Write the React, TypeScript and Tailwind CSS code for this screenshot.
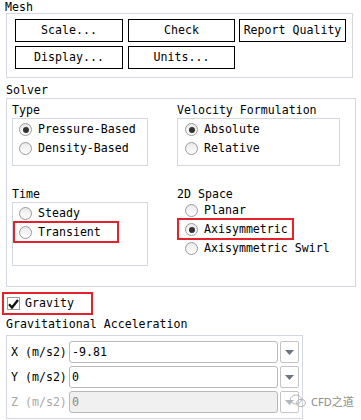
import React from 'react';

const FONT = "font-['DejaVu_Sans_Mono','Liberation_Mono',monospace]";

const Radio: React.FC<{ checked?: boolean }> = ({ checked }) => (
  <span className="flex items-center justify-center w-[13px] h-[13px] rounded-full border border-[#9a9a9a] bg-[linear-gradient(#e9e9e9,#ffffff)] shrink-0">
    {checked && <span className="w-[6px] h-[6px] rounded-full bg-[#333]" />}
  </span>
);

const RadioRow: React.FC<{ label: string; checked?: boolean }> = ({ label, checked }) => (
  <div className="flex items-center h-[19px] gap-[6px] whitespace-nowrap">
    <Radio checked={checked} />
    <span>{label}</span>
  </div>
);

const MeshButton: React.FC<{ label: string; w: string }> = ({ label, w }) => (
  <button className={`${w} h-[23px] border border-black bg-white flex items-center justify-center`}>{label}</button>
);

const VectorRow: React.FC<{ axis: string; value: string; disabled?: boolean }> = ({ axis, value, disabled }) => (
  <div className="flex items-center h-[22px]">
    <span className={`w-[58px] whitespace-nowrap ${disabled ? 'text-[#a8a8a8]' : ''}`}>{axis} (m/s2)</span>
    <div
      className={`w-[209px] h-[22px] border border-[#b9b9b9] rounded-[3px] flex items-center pl-[2px] ${
        disabled ? 'bg-[#f0f0f0] text-[#888]' : 'bg-white'
      }`}
    >
      {value}
    </div>
    <div className="ml-[2px] w-[19px] h-[22px] border border-[#c4c4c4] rounded-[2px] flex items-center justify-center">
      <svg width="9" height="5" viewBox="0 0 9 5">
        <path d="M0 0 H9 L4.5 5 Z" fill={disabled ? '#b0b6bd' : '#6b7480'} />
      </svg>
    </div>
  </div>
);

export default function App() {
  return (
    <div className={`relative w-[361px] h-[420px] bg-white text-black text-[11.6px] leading-[13px] overflow-hidden ${FONT}`}>
      <div className="pl-[5px] pt-[1px] h-[13px]">Mesh</div>
      <div className="ml-[6px] w-[347px] h-[65px] border border-[#d3d8e0] pt-[5px] pl-[8px]">
        <div className="flex">
          <MeshButton label="Scale..." w="w-[108px]" />
          <div className="w-[5px]" />
          <MeshButton label="Check" w="w-[107px]" />
          <div className="w-[4px]" />
          <MeshButton label="Report Quality" w="w-[107px]" />
        </div>
        <div className="flex mt-[4px]">
          <MeshButton label="Display..." w="w-[108px]" />
          <div className="w-[5px]" />
          <MeshButton label="Units..." w="w-[107px]" />
        </div>
      </div>

      <div className="pl-[6px] mt-[6px] h-[13px]">Solver</div>
      <div className="ml-[6px] mt-[1px] w-[350px] h-[189px] border border-[#d3d8e0] flex">
        <div className="w-[142px] pl-[5px] pt-[5px]">
          <div className="h-[13px]">Type</div>
          <div className="mt-[1px] w-[136px] h-[48px] border border-[#d3d8e0] pt-[1px] pl-[6px]">
            <RadioRow label="Pressure-Based" checked />
            <RadioRow label="Density-Based" />
          </div>
          <div className="h-[13px] mt-[22px]">Time</div>
          <div className="mt-[1px] w-[136px] h-[64px] border border-[#d3d8e0] pt-[1px] pl-[6px]">
            <RadioRow label="Steady" />
            <div className="relative">
              <RadioRow label="Transient" />
              <span className="absolute -left-[6px] -top-[2px] w-[106px] h-[22px] border-2 border-[#e5212a]" />
            </div>
          </div>
        </div>
        <div className="pl-[28px] pt-[5px]">
          <div className="h-[13px]">Velocity Formulation</div>
          <div className="mt-[1px] w-[163px] h-[48px] border border-[#d3d8e0] pt-[1px] pl-[7px]">
            <RadioRow label="Absolute" checked />
            <RadioRow label="Relative" />
          </div>
          <div className="h-[13px] mt-[22px]">2D Space</div>
          <div className="pl-[8px]">
            <RadioRow label="Planar" />
            <div className="relative">
              <RadioRow label="Axisymmetric" checked />
              <span className="absolute -left-[8px] -top-[2px] w-[117px] h-[22px] border-2 border-[#e5212a]" />
            </div>
            <RadioRow label="Axisymmetric Swirl" />
          </div>
        </div>
      </div>

      <div className="relative mt-[5px] ml-[7px] h-[23px] flex items-center gap-[5px]">
        <span className="w-[13px] h-[13px] border border-[#9a9a9a] bg-white flex items-center justify-center">
          <svg width="11" height="10" viewBox="0 0 11 10">
            <path d="M1 5.2 L4 8.5 L10 1" stroke="#111" strokeWidth="2.4" fill="none" />
          </svg>
        </span>
        <span>Gravity</span>
        <span className="absolute -left-[5px] top-0 w-[91px] h-[23px] border-2 border-[#e5212a]" />
      </div>

      <div className="pl-[6px] mt-[3px] h-[13px]">Gravitational Acceleration</div>
      <div className="ml-[6px] mt-[4px] w-[297px] h-[84px] border border-[#d3d8e0] pt-[5px] pl-[4px] flex flex-col gap-[3px]">
        <VectorRow axis="X" value="-9.81" />
        <VectorRow axis="Y" value="0" />
        <VectorRow axis="Z" value="0" disabled />
      </div>

      <div className="absolute left-[290px] top-[394px] flex items-center gap-[5px] text-[#8a8a8a] font-['Noto_Sans','Noto_Sans_CJK_SC',sans-serif] text-[11px]">
        <svg width="16" height="14" viewBox="0 0 16 14">
          <ellipse cx="6" cy="5.5" rx="5.5" ry="4.5" fill="none" stroke="#b5b5b5" strokeWidth="1" />
          <ellipse cx="11" cy="9" rx="4.3" ry="3.6" fill="none" stroke="#b5b5b5" strokeWidth="1" />
        </svg>
        <span>CFD之道</span>
      </div>
    </div>
  );
}
